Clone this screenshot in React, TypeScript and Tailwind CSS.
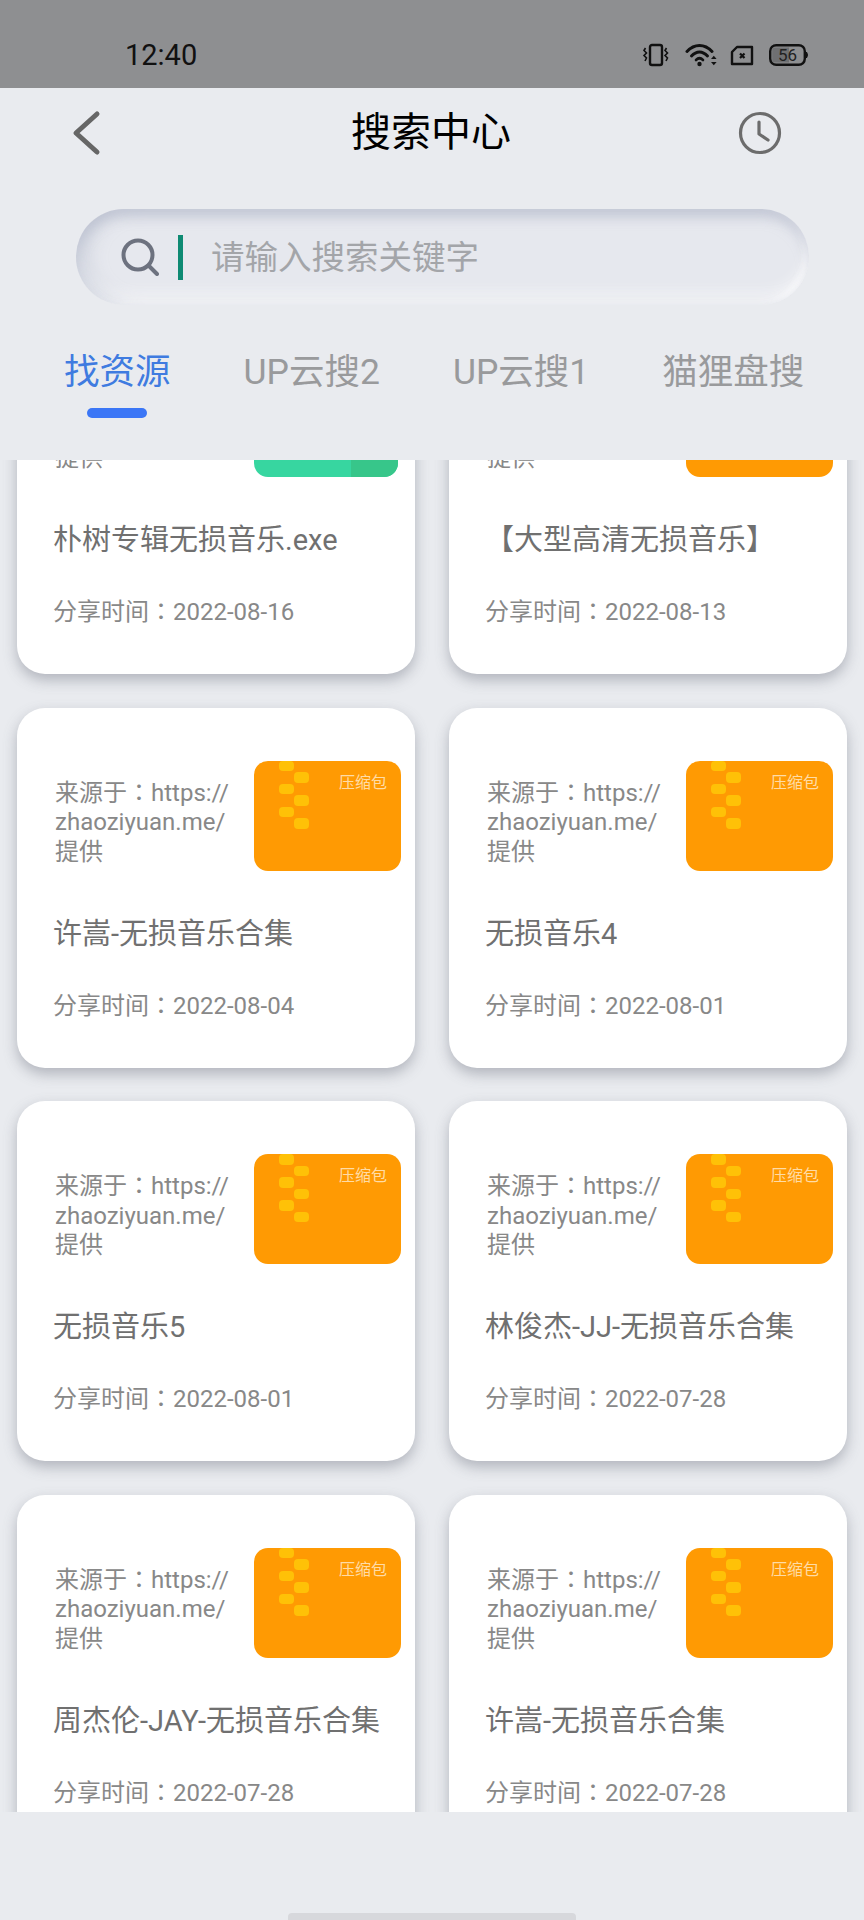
const FONT = "font-['Roboto','Noto_Sans_CJK_SC',sans-serif]";

type Item = { title: string; date: string; green?: boolean };

const rows: Item[][] = [
  [
    { title: "朴树专辑无损音乐.exe", date: "2022-08-16", green: true },
    { title: "【大型高清无损音乐】", date: "2022-08-13" },
  ],
  [
    { title: "许嵩-无损音乐合集", date: "2022-08-04" },
    { title: "无损音乐4", date: "2022-08-01" },
  ],
  [
    { title: "无损音乐5", date: "2022-08-01" },
    { title: "林俊杰-JJ-无损音乐合集", date: "2022-07-28" },
  ],
  [
    { title: "周杰伦-JAY-无损音乐合集", date: "2022-07-28" },
    { title: "许嵩-无损音乐合集", date: "2022-07-28" },
  ],
];

// The full-width colon sits centred in the cell in the TC face.
function Colon() {
  return <span className="font-['Noto_Sans_CJK_TC',sans-serif]">：</span>;
}

function StatusIcons() {
  return (
    <div className="flex items-center">
      <svg width="28" height="24" viewBox="0 0 28 24" fill="none" stroke="#111" strokeWidth="2">
        <rect x="8" y="2" width="12" height="20" rx="2" strokeWidth="2.4" />
        <path d="M3.5 5 l-1.5 2.5 l2.5 2.5 l-2.5 2.5 l2.5 2.5 l-1.5 3" strokeWidth="1.6" />
        <path d="M24.5 5 l-1.5 2.5 l2.5 2.5 l-2.5 2.5 l2.5 2.5 l-1.5 3" strokeWidth="1.6" />
      </svg>
      <svg className="ml-[15px]" width="33" height="24" viewBox="0 0 33 24" fill="none" stroke="#111" strokeLinecap="round">
        <path d="M2 8.5 C9.5 0.5 19.5 0.5 27 8.5" strokeWidth="3" />
        <path d="M6.5 13 C11.5 7.5 17.5 7.5 22.5 13" strokeWidth="3" />
        <path d="M11 17 C13.5 14.5 15.5 14.5 18 17" strokeWidth="2.6" />
        <circle cx="14.5" cy="21" r="2.2" fill="#111" stroke="none" />
        <path d="M26 16 l2.8 -3.2 l2.8 3.2 z" fill="#111" stroke="none" />
        <path d="M26 19 l2.8 3.2 l2.8 -3.2 z" fill="#111" stroke="none" />
      </svg>
      <svg className="ml-[12px]" width="24" height="21" viewBox="0 0 24 21" fill="none" stroke="#111">
        <path d="M7 2 H22 V19 H2 V7 Z" strokeWidth="2.4" strokeLinejoin="round" />
        <path d="M10 8.5 l4.5 4.5 M14.5 8.5 l-4.5 4.5" strokeWidth="2.2" />
      </svg>
      <svg className="ml-[15px]" width="40" height="22" viewBox="0 0 40 22">
        <rect x="1.2" y="1.2" width="34.6" height="19.6" rx="6" fill="none" stroke="#111" strokeWidth="2.4" />
        <path d="M5 3.5 H20 V18.5 H5 Q3.2 18.5 3.2 16.5 V5.5 Q3.2 3.5 5 3.5 Z" fill="#6f7072" />
        <path d="M37.5 8 Q39.5 11 37.5 14 Z" fill="#111" stroke="#111" strokeWidth="1" />
        <text x="18.5" y="17" textAnchor="middle" fontSize="17" fill="#222" fontFamily="Roboto, sans-serif">56</text>
      </svg>
    </div>
  );
}

function Archive({ green }: { green?: boolean }) {
  if (green) {
    return (
      <div className="w-[144px] h-[110px] mr-[3px] rounded-[14px] overflow-hidden flex justify-end bg-[#37d6a0]">
        <div className="w-[47px] h-full bg-[#37c68a]" />
      </div>
    );
  }
  const stripes = [false, true, false, true, false, true];
  return (
    <div className="w-[147px] h-[110px] rounded-[14px] bg-[#ff9a03] relative overflow-hidden">
      <div className="ml-[25px] flex flex-col gap-[1px]">
        {stripes.map((right, i) => (
          <div
            key={i}
            className={
              right
                ? "ml-[15px] w-[15px] h-[10.5px] rounded-[4px] bg-[#ffc107]"
                : "w-[15px] h-[10.5px] rounded-[4px] bg-[#ffc107]"
            }
          />
        ))}
      </div>
      <span className="absolute right-[14px] top-[11px] text-[16px] leading-[22px] text-[#ffdca6]">压缩包</span>
    </div>
  );
}

function Card({ item }: { item: Item }) {
  return (
    <div className="w-[398px] h-[360px] bg-white rounded-[28px] shadow-[0_6px_14px_rgba(100,104,118,0.42)] flex flex-col">
      <div className="flex justify-between pt-[53px] pr-[14px] pl-[38px]">
        <p className="pt-[15px] text-[24px] leading-[29.5px] text-[#888888] whitespace-nowrap">
          来源于
          <Colon />
          https://
          <br />
          zhaoziyuan.me/
          <br />
          提供
        </p>
        <Archive green={item.green} />
      </div>
      <p className="pl-[36px] mt-[43px] text-[29px] leading-[40px] text-[#707070] whitespace-nowrap">{item.title}</p>
      <p className="pl-[36px] mt-[34px] text-[24px] leading-[32px] text-[#888888] whitespace-nowrap">
        分享时间
        <Colon />
        {item.date}
      </p>
    </div>
  );
}

export default function App() {
  return (
    <div className={`${FONT} w-[864px] h-[1920px] bg-[#e9ebef] flex flex-col overflow-hidden relative`}>
      <div className="h-[88px] shrink-0 bg-[#8e8f91] flex items-end justify-between pl-[125px] pr-[55px] pb-[16px]">
        <span className="text-[29px] leading-[34px] text-[#111]">12:40</span>
        <div className="pb-[5px]">
          <StatusIcons />
        </div>
      </div>

      <div className="h-[84px] shrink-0 flex items-center justify-between pl-[70px] pr-[82px] pt-[5px]">
        <svg width="32" height="46" viewBox="0 0 32 46" fill="none" stroke="#666" strokeWidth="5" strokeLinecap="round" strokeLinejoin="round">
          <path d="M27 4 L6 23 L27 42" />
        </svg>
        <h1 className="ml-[22px] text-[40px] leading-[48px] font-normal text-black">搜索中心</h1>
        <svg width="44" height="44" viewBox="0 0 44 44" fill="none" stroke="#6c6c6c" strokeWidth="3.2" strokeLinecap="round" strokeLinejoin="round">
          <circle cx="22" cy="22" r="19.5" />
          <path d="M21 11 V23 L30 29" />
        </svg>
      </div>

      <div className="mt-[37px] mx-[76px] w-[733px] h-[96px] shrink-0 rounded-full bg-[#e6e8ee] shadow-[inset_0_8px_12px_rgba(176,182,200,0.55),inset_12px_0_18px_rgba(176,182,200,0.4),inset_0_-12px_14px_rgba(255,255,255,0.6),inset_-4px_-3px_6px_rgba(255,255,255,0.9)] flex items-center pl-[45px]">
        <svg width="38" height="38" viewBox="0 0 38 38" fill="none" stroke="#6d727f" strokeWidth="4" strokeLinecap="round">
          <circle cx="17" cy="17" r="14.5" />
          <path d="M28 28 L36 36" />
        </svg>
        <div className="ml-[19px] w-[5px] h-[45px] bg-[#0e8a73]" />
        <span className="ml-[28px] pt-[1px] text-[33.5px] leading-[44px] text-[#a3a5a9]">请输入搜索关键字</span>
      </div>

      <div className="mt-[43px] shrink-0 flex pl-[64px] gap-[73px] text-[35.5px] leading-[48px] text-[#999a9c] whitespace-nowrap">
        <span className="text-[#3f7be0]">找资源</span>
        <span>UP云搜2</span>
        <span>UP云搜1</span>
        <span>猫狸盘搜</span>
      </div>
      <div className="mt-[12px] ml-[87px] w-[60px] h-[10px] shrink-0 rounded-full bg-[#3b76f6]" />

      {/* result list, scrolled part way through its first row */}
      <div className="mt-[42px] h-[1352px] shrink-0 overflow-hidden">
        <div className="-mt-[146px] flex flex-col gap-[33.5px] px-[17px]">
          {rows.map((row, i) => (
            <div key={i} className="flex justify-between">
              {row.map((item) => (
                <Card key={item.title + item.date} item={item} />
              ))}
            </div>
          ))}
        </div>
      </div>

      <div className="mt-auto mx-auto w-[288px] h-[7px] rounded-t-[4px] bg-[#d7d8dc]" />
    </div>
  );
}
